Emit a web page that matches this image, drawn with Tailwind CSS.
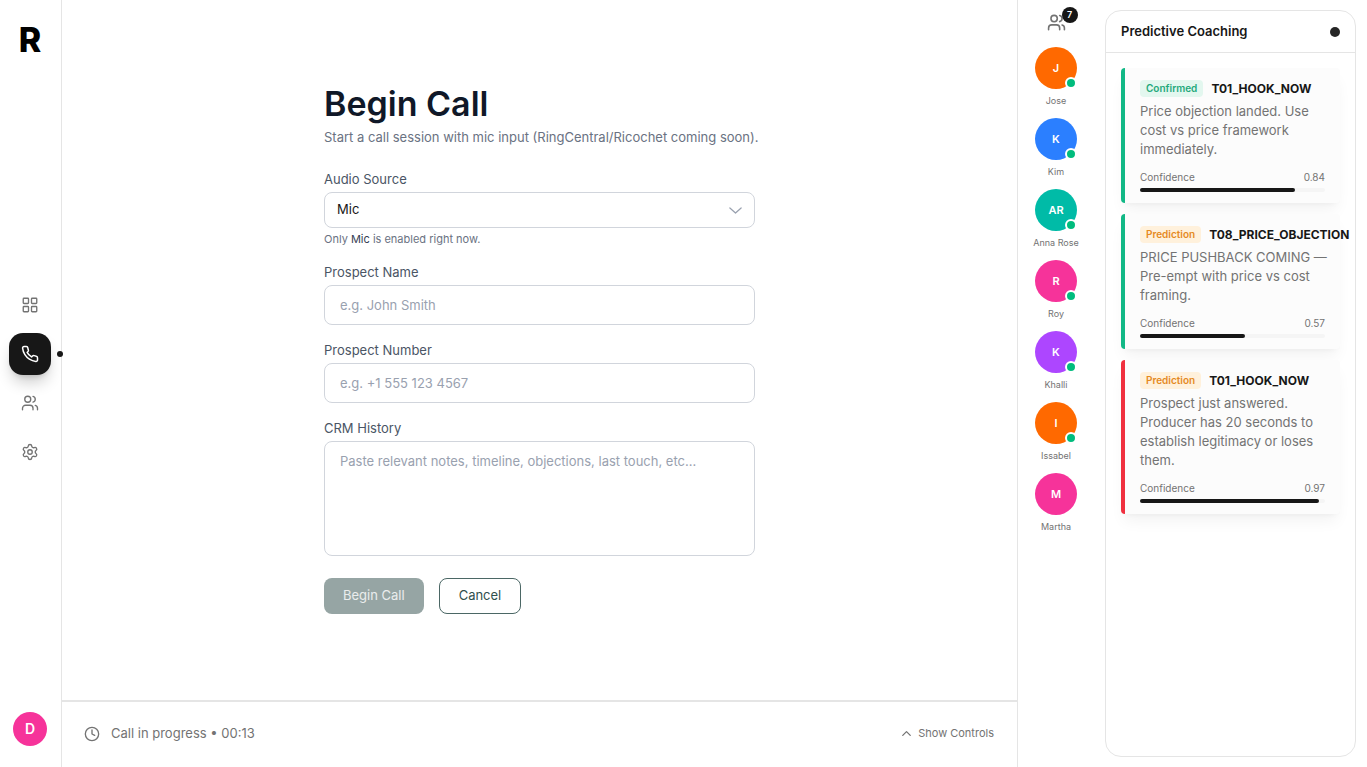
<!DOCTYPE html>
<html lang="en">
<head>
    <meta charset="UTF-8">
    <meta name="viewport" content="width=device-width, initial-scale=1.0">
    <title>Begin Call</title>
    <script src="https://cdn.jsdelivr.net/npm/@tailwindcss/browser@4"></script>
</head>
<body class="flex h-screen overflow-hidden bg-white font-['Inter',sans-serif] text-[13px] text-neutral-900">

    <!-- Sidebar -->
    <aside class="flex w-[62px] shrink-0 flex-col items-center justify-between border-r border-neutral-200 pt-5 pr-px pb-[21px]">
        <a href="#" aria-label="Home" class="text-[34px] leading-10 font-extrabold text-black">R</a>
        <nav class="flex flex-col gap-[7px] pb-4">
            <a href="#" aria-label="Dashboard" class="flex size-[42px] items-center justify-center text-neutral-500">
                <svg class="size-[18px]" viewBox="0 0 24 24" fill="none" stroke="currentColor" stroke-width="1.8" stroke-linecap="round" stroke-linejoin="round"><rect x="3" y="3" width="7" height="7" rx="1"/><rect x="14" y="3" width="7" height="7" rx="1"/><rect x="14" y="14" width="7" height="7" rx="1"/><rect x="3" y="14" width="7" height="7" rx="1"/></svg>
            </a>
            <a href="#" aria-label="Calls" class="relative flex size-[42px] items-center justify-center rounded-[14px] bg-neutral-900 text-white shadow-lg shadow-black/20">
                <svg class="size-[18px]" viewBox="0 0 24 24" fill="none" stroke="currentColor" stroke-width="2" stroke-linecap="round" stroke-linejoin="round"><path d="M22 16.92v3a2 2 0 0 1-2.18 2 19.79 19.79 0 0 1-8.63-3.07 19.5 19.5 0 0 1-6-6 19.79 19.79 0 0 1-3.07-8.67A2 2 0 0 1 4.11 2h3a2 2 0 0 1 2 1.72 12.84 12.84 0 0 0 .7 2.81 2 2 0 0 1-.45 2.11L8.09 9.91a16 16 0 0 0 6 6l1.27-1.27a2 2 0 0 1 2.11-.45 12.84 12.84 0 0 0 2.81.7A2 2 0 0 1 22 16.92z"/></svg>
                <span class="absolute top-[18px] -right-3 size-[6px] rounded-full bg-neutral-900"></span>
            </a>
            <a href="#" aria-label="Team" class="flex size-[42px] items-center justify-center text-neutral-500">
                <svg class="size-[18px]" viewBox="0 0 24 24" fill="none" stroke="currentColor" stroke-width="1.8" stroke-linecap="round" stroke-linejoin="round"><path d="M16 21v-2a4 4 0 0 0-4-4H6a4 4 0 0 0-4 4v2"/><circle cx="9" cy="7" r="4"/><path d="M22 21v-2a4 4 0 0 0-3-3.87"/><path d="M16 3.13a4 4 0 0 1 0 7.75"/></svg>
            </a>
            <a href="#" aria-label="Settings" class="flex size-[42px] items-center justify-center text-neutral-500">
                <svg class="size-[18px]" viewBox="0 0 24 24" fill="none" stroke="currentColor" stroke-width="1.8" stroke-linecap="round" stroke-linejoin="round"><path d="M9.671 4.136a2.34 2.34 0 0 1 4.659 0 2.34 2.34 0 0 0 3.319 1.915 2.34 2.34 0 0 1 2.33 4.033 2.34 2.34 0 0 0 0 3.831 2.34 2.34 0 0 1-2.33 4.033 2.34 2.34 0 0 0-3.319 1.915 2.34 2.34 0 0 1-4.659 0 2.34 2.34 0 0 0-3.32-1.915 2.34 2.34 0 0 1-2.33-4.033 2.34 2.34 0 0 0 0-3.831A2.34 2.34 0 0 1 6.35 6.051a2.34 2.34 0 0 0 3.319-1.915"/><circle cx="12" cy="12" r="3"/></svg>
            </a>
        </nav>
        <button type="button" class="size-[34px] rounded-full bg-[#f6339a] text-sm font-semibold text-white">D</button>
    </aside>

    <!-- Main column -->
    <main class="flex min-w-0 flex-1 flex-col">
        <div class="flex flex-1 items-center justify-center">
            <form class="w-[431px]">
                <h1 class="text-[34px] leading-9 font-semibold text-gray-900">Begin Call</h1>
                <p class="mt-[5px] leading-5 whitespace-nowrap text-gray-500">Start a call session with mic input (RingCentral/Ricochet coming soon).</p>

                <div class="mt-[22px]">
                    <label for="source" class="block leading-5 text-gray-600">Audio Source</label>
                    <div class="relative mt-[3px]">
                        <select id="source" class="block h-9 w-full appearance-none rounded-lg border border-gray-300 bg-white px-3 text-neutral-900">
                            <option>Mic</option>
                        </select>
                        <svg class="pointer-events-none absolute top-[11px] right-3 size-[15px] text-gray-400" viewBox="0 0 24 24" fill="none" stroke="currentColor" stroke-width="2" stroke-linecap="round" stroke-linejoin="round"><path d="m3 8 9 8 9-8"/></svg>
                    </div>
                    <p class="mt-[3px] text-[11px] leading-4 text-gray-500">Only <span class="text-gray-700">Mic</span> is enabled right now.</p>
                </div>

                <div class="mt-[15px]">
                    <label for="name" class="block leading-5 text-gray-600">Prospect Name</label>
                    <input id="name" type="text" placeholder="e.g. John Smith" class="mt-[3px] block h-10 w-full rounded-lg border border-gray-300 px-[15px] placeholder:text-gray-400">
                </div>

                <div class="mt-[15px]">
                    <label for="number" class="block leading-5 text-gray-600">Prospect Number</label>
                    <input id="number" type="tel" placeholder="e.g. +1 555 123 4567" class="mt-[3px] block h-10 w-full rounded-lg border border-gray-300 px-[15px] placeholder:text-gray-400">
                </div>

                <div class="mt-[15px]">
                    <label for="history" class="block leading-5 text-gray-600">CRM History</label>
                    <textarea id="history" placeholder="Paste relevant notes, timeline, objections, last touch, etc..." class="mt-[3px] block h-[115px] w-full resize-none rounded-lg border border-gray-300 px-[15px] py-[9px] leading-5 placeholder:text-gray-400"></textarea>
                </div>

                <div class="mt-[22px] flex gap-[15px]">
                    <button type="submit" class="h-9 rounded-lg bg-[#96a5a4] px-[19px] text-white/80">Begin Call</button>
                    <button type="button" class="h-9 rounded-lg border border-[#4b6765] px-[19px] text-[#2f4f4d]">Cancel</button>
                </div>
            </form>
        </div>

        <footer class="flex h-[67px] shrink-0 items-center justify-between border-t-2 border-neutral-200 pr-[23px] pb-[2px] pl-[22px] text-neutral-500">
            <div class="flex items-center gap-[11px]">
                <svg class="size-[16px]" viewBox="0 0 24 24" fill="none" stroke="currentColor" stroke-width="2" stroke-linecap="round" stroke-linejoin="round"><circle cx="12" cy="12" r="10"/><path d="M12 6v6l4 2"/></svg>
                <span>Call in progress • 00:13</span>
            </div>
            <button type="button" class="flex items-center gap-1 text-[11px]">
                <svg class="size-[15px]" viewBox="0 0 24 24" fill="none" stroke="currentColor" stroke-width="2" stroke-linecap="round" stroke-linejoin="round"><path d="m18 15-6-6-6 6"/></svg>
                Show Controls
            </button>
        </footer>
    </main>

    <!-- Team column -->
    <aside class="flex w-[76px] shrink-0 flex-col items-center border-l border-neutral-200 pt-[13px] pl-px text-[9px] text-neutral-500">
        <div class="relative mb-[15px]">
            <svg class="size-[19px]" viewBox="0 0 24 24" fill="none" stroke="currentColor" stroke-width="2" stroke-linecap="round" stroke-linejoin="round"><path d="M16 21v-2a4 4 0 0 0-4-4H6a4 4 0 0 0-4 4v2"/><circle cx="9" cy="7" r="4"/><path d="M22 21v-2a4 4 0 0 0-3-3.87"/><path d="M16 3.13a4 4 0 0 1 0 7.75"/></svg>
            <span class="absolute -top-[6px] -right-3 flex size-4 items-center justify-center rounded-full bg-neutral-900 text-[9px] font-semibold text-white">7</span>
        </div>
        <ul class="flex flex-col gap-[10px]">
            <li class="flex flex-col items-center gap-1">
                <div class="relative flex size-[42px] items-center justify-center rounded-full bg-[#ff6900] text-[11px] font-semibold text-white">J<span class="absolute right-0 bottom-0 size-3 rounded-full border-2 border-white bg-[#00bc7d]"></span></div>
                <span class="leading-[15px]">Jose</span>
            </li>
            <li class="flex flex-col items-center gap-1">
                <div class="relative flex size-[42px] items-center justify-center rounded-full bg-[#2b7fff] text-[11px] font-semibold text-white">K<span class="absolute right-0 bottom-0 size-3 rounded-full border-2 border-white bg-[#00bc7d]"></span></div>
                <span class="leading-[15px]">Kim</span>
            </li>
            <li class="flex flex-col items-center gap-1">
                <div class="relative flex size-[42px] items-center justify-center rounded-full bg-[#00bba7] text-[11px] font-semibold text-white">AR<span class="absolute right-0 bottom-0 size-3 rounded-full border-2 border-white bg-[#00bc7d]"></span></div>
                <span class="leading-[15px]">Anna Rose</span>
            </li>
            <li class="flex flex-col items-center gap-1">
                <div class="relative flex size-[42px] items-center justify-center rounded-full bg-[#f6339a] text-[11px] font-semibold text-white">R<span class="absolute right-0 bottom-0 size-3 rounded-full border-2 border-white bg-[#00bc7d]"></span></div>
                <span class="leading-[15px]">Roy</span>
            </li>
            <li class="flex flex-col items-center gap-1">
                <div class="relative flex size-[42px] items-center justify-center rounded-full bg-[#ad46ff] text-[11px] font-semibold text-white">K<span class="absolute right-0 bottom-0 size-3 rounded-full border-2 border-white bg-[#00bc7d]"></span></div>
                <span class="leading-[15px]">Khalli</span>
            </li>
            <li class="flex flex-col items-center gap-1">
                <div class="relative flex size-[42px] items-center justify-center rounded-full bg-[#ff6900] text-[11px] font-semibold text-white">I<span class="absolute right-0 bottom-0 size-3 rounded-full border-2 border-white bg-[#00bc7d]"></span></div>
                <span class="leading-[15px]">Issabel</span>
            </li>
            <li class="flex flex-col items-center gap-1">
                <div class="flex size-[42px] items-center justify-center rounded-full bg-[#f6339a] text-[11px] font-semibold text-white">M</div>
                <span class="leading-[15px]">Martha</span>
            </li>
        </ul>
    </aside>

    <!-- Coaching panel -->
    <section class="my-[10px] mr-[11px] ml-3 w-[251px] shrink-0 rounded-2xl border border-neutral-200">
        <header class="flex h-[42px] items-center justify-between border-b border-neutral-200 px-[15px]">
            <h2 class="font-semibold">Predictive Coaching</h2>
            <span class="size-[10px] rounded-full bg-neutral-800"></span>
        </header>
        <div class="flex flex-col gap-[11px] p-[15px]">
            <article class="rounded-sm border-l-4 border-[#12b886] bg-[#fcfcfc] pt-3 pr-2 pb-[11px] pl-[15px] shadow-lg shadow-black/5">
                <div class="flex items-center gap-2">
                    <span class="rounded-sm bg-[#e3f7ef] px-[6px] text-[10px] leading-[17px] font-semibold text-[#1fa97c]">Confirmed</span>
                    <h3 class="text-[12px] leading-[17px] font-bold">T01_HOOK_NOW</h3>
                </div>
                <p class="mt-[5px] leading-[19px] text-neutral-500">Price objection landed. Use cost vs price framework immediately.</p>
                <div class="mt-[10px] mr-[7px] flex justify-between text-[10px] leading-4 text-neutral-500"><span>Confidence</span><span>0.84</span></div>
                <div class="mt-[3px] mr-[7px] h-1 rounded-full bg-neutral-100"><div class="h-1 rounded-full bg-neutral-900" style="width: 84%"></div></div>
            </article>
            <article class="rounded-sm border-l-4 border-[#12b886] bg-[#fcfcfc] pt-3 pr-2 pb-[11px] pl-[15px] shadow-lg shadow-black/5">
                <div class="flex items-center gap-2">
                    <span class="rounded-sm bg-[#fff1dc] px-[6px] text-[10px] leading-[17px] font-semibold text-[#e58a1f]">Prediction</span>
                    <h3 class="text-[12px] leading-[17px] font-bold">T08_PRICE_OBJECTION</h3>
                </div>
                <p class="mt-[5px] leading-[19px] text-neutral-500">PRICE PUSHBACK COMING — Pre-empt with price vs cost framing.</p>
                <div class="mt-[10px] mr-[7px] flex justify-between text-[10px] leading-4 text-neutral-500"><span>Confidence</span><span>0.57</span></div>
                <div class="mt-[3px] mr-[7px] h-1 rounded-full bg-neutral-100"><div class="h-1 rounded-full bg-neutral-900" style="width: 57%"></div></div>
            </article>
            <article class="rounded-sm border-l-4 border-[#f0303f] bg-[#fcfcfc] pt-3 pr-2 pb-[11px] pl-[15px] shadow-lg shadow-black/5">
                <div class="flex items-center gap-2">
                    <span class="rounded-sm bg-[#fff1dc] px-[6px] text-[10px] leading-[17px] font-semibold text-[#e58a1f]">Prediction</span>
                    <h3 class="text-[12px] leading-[17px] font-bold">T01_HOOK_NOW</h3>
                </div>
                <p class="mt-[5px] leading-[19px] text-neutral-500">Prospect just answered. Producer has 20 seconds to establish legitimacy or loses them.</p>
                <div class="mt-[10px] mr-[7px] flex justify-between text-[10px] leading-4 text-neutral-500"><span>Confidence</span><span>0.97</span></div>
                <div class="mt-[3px] mr-[7px] h-1 rounded-full bg-neutral-100"><div class="h-1 rounded-full bg-neutral-900" style="width: 97%"></div></div>
            </article>
        </div>
    </section>

</body>
</html>
